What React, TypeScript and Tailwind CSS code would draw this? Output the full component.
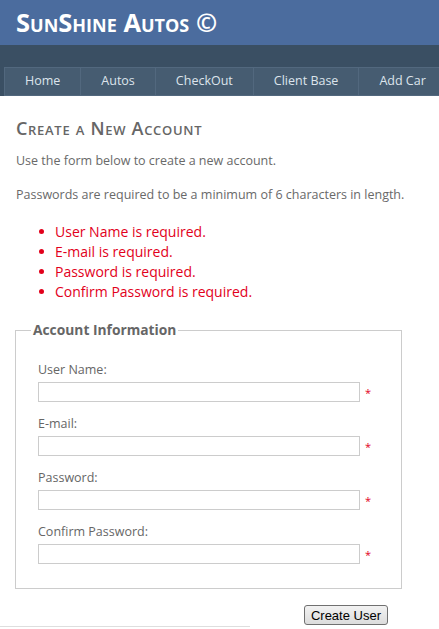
import React from "react";

const navItems = ["Home", "Autos", "CheckOut", "Client Base", "Add Car"];

const errors = [
  "User Name is required.",
  "E-mail is required.",
  "Password is required.",
  "Confirm Password is required.",
];

const fields = ["User Name:", "E-mail:", "Password:", "Confirm Password:"];

export default function App() {
  return (
    <div className="w-[439px] h-[629px] overflow-hidden bg-white font-['Open_Sans',sans-serif] text-[#696969]">
      {/* ── Header ─────────────────────────────── */}
      <header className="h-[45px] bg-[#4b6c9e] pl-[16px] flex items-center">
        <h1 className="text-[25.5px] font-bold text-white [font-variant:small-caps] leading-none whitespace-nowrap">
          SunShine Autos ©
        </h1>
      </header>

      {/* ── Menu strip ─────────────────────────── */}
      <nav className="h-[51px] bg-[#3a4f63] pt-[22px] pl-[4px] overflow-hidden">
        <ul className="flex whitespace-nowrap">
          {navItems.map((item) => (
            <li
              key={item}
              className="h-[29px] bg-[#465c71] border border-[#52687e] -ml-px first:ml-0 px-[20px] flex items-center text-[12.5px] text-[#dde4ec] shrink-0"
            >
              {item}
            </li>
          ))}
        </ul>
      </nav>

      {/* ── Main ───────────────────────────────── */}
      <main className="pl-[16px] pt-[17px] text-[12.5px]">
        <h2 className="text-[18px] leading-[30px] font-semibold tracking-[0.7px] text-[#666] [font-variant:small-caps]">
          Create a New Account
        </h2>
        <p className="mt-[9px] leading-[18px]">Use the form below to create a new account.</p>
        <p className="mt-[16px] leading-[18px]">
          Passwords are required to be a minimum of 6 characters in length.
        </p>

        <ul className="mt-[17px] pl-[23px] text-[14px] text-[#e2001b]">
          {errors.map((e) => (
            <li key={e} className="flex items-center h-[20px]">
              <span className="w-[5px] h-[5px] rounded-full bg-[#e2001b] mr-[11px]" />
              {e}
            </li>
          ))}
        </ul>

        <fieldset className="mt-[19px] -ml-px w-[387px] border border-[#cccccc] pl-[22px] pr-[16px] pt-[21px] pb-[24px]">
          <legend className="-ml-[7px] px-[2px] leading-[20px] text-[13.8px] font-bold text-[#666]">
            Account Information
          </legend>
          <div className="flex flex-col gap-[13px]">
            {fields.map((f) => (
              <div key={f}>
                <label className="block leading-[18px] text-[12.5px] text-[#666]">{f}</label>
                <div className="mt-[3px] flex items-center">
                  <input
                    type={f.startsWith("E") ? "email" : f.includes("Password") ? "password" : "text"}
                    className="w-[322px] h-[20px] border border-[#cccccc] bg-white outline-none"
                  />
                  <span className="ml-[5px] text-[11px] text-[#e2001b] leading-none">*</span>
                </div>
              </div>
            ))}
          </div>
        </fieldset>

        <div className="w-[372px] mt-[16px] flex justify-end">
          <button className="h-[20px] px-[6px] border border-[#707070] rounded-[3px] bg-gradient-to-b from-[#f2f2f2] to-[#dcdcdc] text-[13px] leading-none text-black font-['Liberation_Sans',Arial,sans-serif]">
            Create User
          </button>
        </div>
      </main>
      <div className="mt-[1px] h-px w-[250px] bg-[#dedede]" />
    </div>
  );
}
